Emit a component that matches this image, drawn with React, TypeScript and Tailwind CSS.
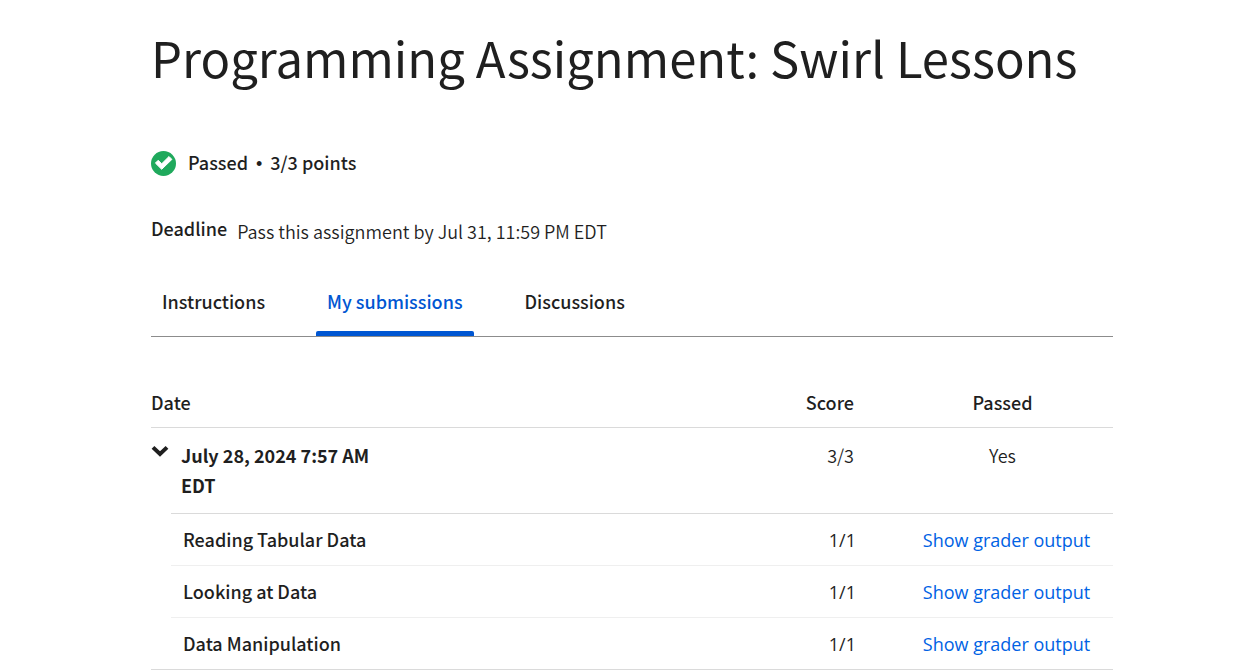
const tabs = [
  { label: "Instructions", href: "#instructions", active: false },
  { label: "My submissions", href: "#submissions", active: true },
  { label: "Discussions", href: "#discussions", active: false },
];

const parts = [
  { name: "Reading Tabular Data", score: "1/1" },
  { name: "Looking at Data", score: "1/1" },
  { name: "Data Manipulation", score: "1/1" },
];

function PassedIcon() {
  return (
    <svg viewBox="0 0 25 25" className="size-[25px] shrink-0" aria-hidden="true">
      <circle cx="12.5" cy="12.5" r="12.5" fill="#1fa95c" />
      <path d="M4.4 12.1l2.8-2.8 3.5 3.5 7.3-7.3 2.9 2.9-10.2 9.9z" fill="#fff" stroke="#fff" strokeWidth="1" strokeLinejoin="round" />
    </svg>
  );
}

function ChevronIcon() {
  return (
    <svg viewBox="0 0 18 12" className="h-3 w-[18px]" aria-hidden="true">
      <path d="M2 2.4l7 6.6 7-6.6" fill="none" stroke="#1f1f1f" strokeWidth="4" />
    </svg>
  );
}

export default function App() {
  return (
    <main className="min-h-screen bg-white pt-[21px] pr-[130px] pl-[151px] font-['Noto_Sans_CJK_SC',sans-serif] text-[18px] leading-[30px] text-[#1f1f1f]">
      <h1 className="text-[49px] leading-[72px]">Programming Assignment: Swirl Lessons</h1>

      <div className="mt-[55px] flex h-[30px] items-center gap-3 font-medium">
        <PassedIcon />
        <p className="flex items-baseline gap-2">
          <span>Passed</span>
          <span className="font-['Liberation_Sans',sans-serif]">•</span>
          <span>3/3 points</span>
        </p>
      </div>

      <dl className="mt-[35px] flex gap-[10px]">
        <dt className="font-medium">Deadline</dt>
        <dd className="pt-[3px] font-[350]">Pass this assignment by Jul 31, 11:59 PM EDT</dd>
      </dl>

      <nav className="mt-10 flex gap-10 border-b border-[#8c8c8c] font-medium" aria-label="Assignment">
        {tabs.map((tab) => (
          <a
            key={tab.label}
            href={tab.href}
            aria-current={tab.active ? "page" : undefined}
            className={tab.active ? "flex flex-col text-[#0056d2]" : "flex flex-col"}
          >
            <span className="px-[11px] pb-[15px]">{tab.label}</span>
            <span className={tab.active ? "h-[5px] rounded-t-xs bg-[#0056d2]" : "h-[5px]"} />
          </a>
        ))}
      </nav>

      <table className="mt-[50px] w-full table-fixed border-separate border-spacing-0">
        <colgroup>
          <col className="w-5" />
          <col />
          <col className="w-[120px]" />
          <col className="w-[221px]" />
        </colgroup>
        <thead>
          <tr>
            <th colSpan={2} className="border-b border-[#dadada] pb-[10px] text-left font-medium">Date</th>
            <th className="border-b border-[#dadada] pr-[38px] pb-[10px] text-right font-medium">Score</th>
            <th className="border-b border-[#dadada] pb-[10px] text-center font-medium">Passed</th>
          </tr>
        </thead>
        <tbody>
          <tr className="align-top">
            <td className="pt-[17px]">
              <button type="button" aria-label="Toggle submission details" aria-expanded="true" className="flex">
                <ChevronIcon />
              </button>
            </td>
            <th className="border-b border-[#dadada] pt-3 pr-3 pb-[13px] pl-[10px] text-left font-bold">
              <div className="max-w-[200px]">July 28, 2024 7:57 AM EDT</div>
            </th>
            <td className="border-b border-[#dadada] pt-3 pr-[38px] text-right font-[350]">3/3</td>
            <td className="border-b border-[#dadada] pt-3 text-center font-[350]">Yes</td>
          </tr>
          {parts.map((part, i) => {
            const last = i === parts.length - 1;
            const line = last ? "border-[#dadada]" : "border-[#efefef]";
            return (
              <tr key={part.name} className="h-[52px]">
                <td className={last ? "border-b border-[#dadada]" : ""} />
                <th className={`border-b ${line} pb-0.5 pl-3 text-left font-medium`}>{part.name}</th>
                <td className={`border-b ${line} pr-9 text-right font-['Open_Sans',sans-serif]`}>{part.score}</td>
                <td className={`border-b ${line} pl-2 text-center font-['Open_Sans',sans-serif]`}>
                  <button type="button" className="text-[#0062e4]">Show grader output</button>
                </td>
              </tr>
            );
          })}
        </tbody>
      </table>
    </main>
  );
}
